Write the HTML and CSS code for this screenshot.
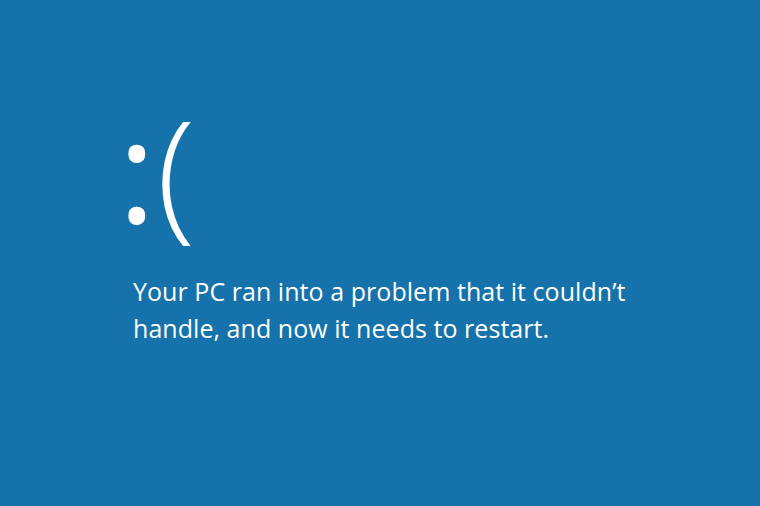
FILE: index.html
```html
<!DOCTYPE html>
<html>
<head>
<meta charset="utf-8">
<link rel="stylesheet" href="styles.css">
</head>
<body>
<main class="screen">
  <div class="face"><span class="eyes">:</span><span class="mouth">(</span></div>
  <p class="message">Your PC ran into a problem that it couldn’t<br>handle, and now it needs to restart.</p>
</main>
</body>
</html>
```
FILE: styles.css
```css
html, body {
  margin: 0;
  padding: 0;
  width: 760px;
  height: 506px;
  background: #1572aa;
  overflow: hidden;
}
.screen {
  padding: 88px 0 0 133px;
  color: #ffffff;
  font-family: "Open Sans", "Noto Sans", sans-serif;
}
.face {
  margin-left: -15px;
  font-size: 143px;
  line-height: 160px;
  height: 185px;
}
.eyes {
  font-weight: 400;
  margin-right: 1px;
}
.mouth {
  font-weight: 300;
}
.message {
  margin: 0;
  font-size: 25px;
  line-height: 37px;
  font-weight: 400;
  letter-spacing: 0.05px;
}
```
